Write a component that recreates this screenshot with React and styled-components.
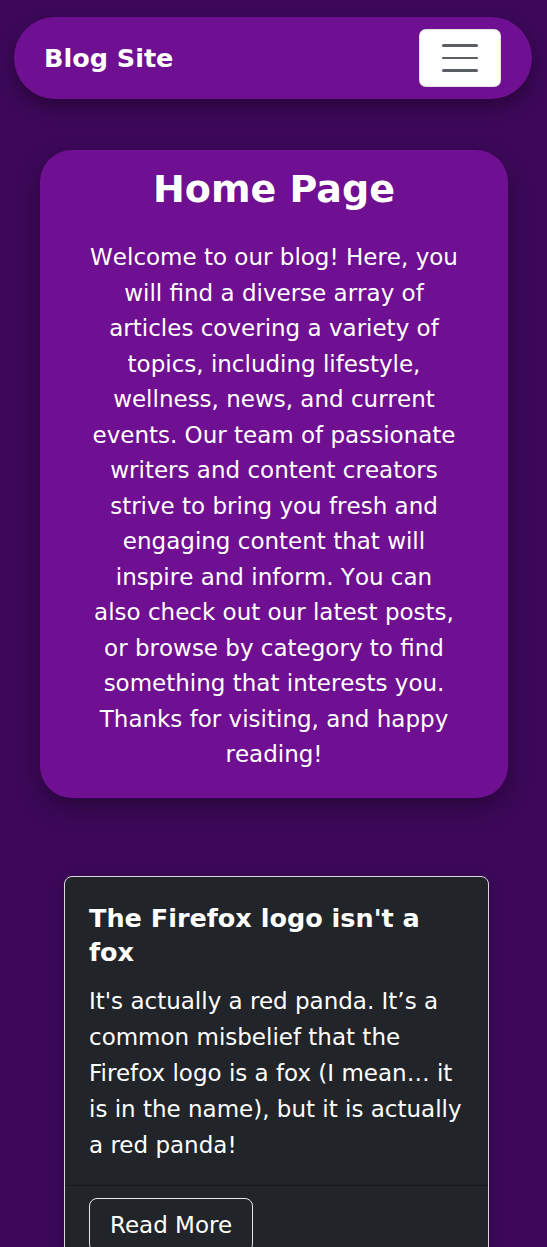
import React from "react";
import styled, { createGlobalStyle } from "styled-components";

const GlobalStyle = createGlobalStyle`
  html, body {
    margin: 0;
    padding: 0;
    background: #3d085a;
  }
  body {
    font-family: "DejaVu Sans", "Liberation Sans", sans-serif;
    color: #ffffff;
    overflow: hidden;
  }
  * { box-sizing: border-box; }
`;

const Page = styled.div`
  display: flex;
  flex-direction: column;
  padding-top: 17px;
  min-height: 1247px;
`;

const Navbar = styled.nav`
  margin: 0 15px 0 14px;
  height: 82px;
  border-radius: 41px;
  background: #6f0f91;
  display: flex;
  align-items: center;
  justify-content: space-between;
  padding: 0 31px 0 30px;
  box-shadow: 0 8px 18px rgba(0, 0, 0, 0.35);
`;

const Brand = styled.a`
  font-weight: 700;
  font-size: 25.5px;
  color: #ffffff;
  text-decoration: none;
`;

const Toggler = styled.button`
  width: 82px;
  height: 58px;
  background: #ffffff;
  border: 1px solid rgba(0, 0, 0, 0.1);
  border-radius: 7px;
  display: flex;
  flex-direction: column;
  align-items: center;
  justify-content: center;
  gap: 10px;
  padding: 0;
`;

const TogglerBar = styled.span`
  display: block;
  width: 36px;
  height: 2.5px;
  border-radius: 2px;
  background: #5a5d61;
`;

const HomeCard = styled.section`
  margin: 51px 39px 0 40px;
  background: #6f0f91;
  border-radius: 32px;
  padding: 17px 20px 25px;
  box-shadow: 0 10px 24px rgba(0, 0, 0, 0.35);
  text-align: center;
  display: flex;
  flex-direction: column;
  align-items: center;
`;

const HomeTitle = styled.h1`
  margin: 0 0 29px;
  font-size: 38px;
  font-weight: 700;
  line-height: 44px;
`;

const Intro = styled.p`
  margin: 0;
  width: 369px;
  font-size: 23px;
  line-height: 35.5px;
  font-kerning: none;
`;

const PostCard = styled.article`
  margin: 78px 0 0 64px;
  width: 425px;
  background: #212529;
  border: 1px solid #d9d6dc;
  border-radius: 8px;
  box-shadow: 0 6px 16px rgba(0, 0, 0, 0.25);
  overflow: hidden;
`;

const PostBody = styled.div`
  padding: 24px 24px 22px;
`;

const PostTitle = styled.h2`
  margin: 0 0 14px;
  font-size: 25.5px;
  font-weight: 700;
  line-height: 34px;
`;

const PostText = styled.p`
  margin: 0;
  font-size: 23px;
  line-height: 36px;
`;

const PostFooter = styled.div`
  border-top: 1px solid rgba(0, 0, 0, 0.3);
  padding: 12px 24px 24px;
`;

const ReadMore = styled.button`
  background: transparent;
  border: 1px solid #e6e6e6;
  border-radius: 8px;
  color: #ffffff;
  font-family: inherit;
  font-size: 23px;
  line-height: 36px;
  padding: 8px 20px;
`;

export default function App() {
  return (
    <>
      <GlobalStyle />
      <Page>
        <Navbar>
          <Brand href="#">Blog Site</Brand>
          <Toggler aria-label="Toggle navigation">
            <TogglerBar />
            <TogglerBar />
            <TogglerBar />
          </Toggler>
        </Navbar>

        <HomeCard>
          <HomeTitle>Home Page</HomeTitle>
          <Intro>
            Welcome to our blog! Here, you will find a diverse array of articles
            covering a variety of topics, including lifestyle, wellness, news,
            and current events. Our team of passionate writers and content
            creators strive to bring you fresh and engaging content that will
            inspire and inform. You can also check out our latest posts, or
            browse by category to find something that interests you. Thanks for
            visiting, and happy reading!
          </Intro>
        </HomeCard>

        <PostCard>
          <PostBody>
            <PostTitle>The Firefox logo isn't a fox</PostTitle>
            <PostText>
              It's actually a red panda. It’s a common misbelief that the
              Firefox logo is a fox (I mean… it is in the name), but it is
              actually a red panda!
            </PostText>
          </PostBody>
          <PostFooter>
            <ReadMore>Read More</ReadMore>
          </PostFooter>
        </PostCard>
      </Page>
    </>
  );
}
